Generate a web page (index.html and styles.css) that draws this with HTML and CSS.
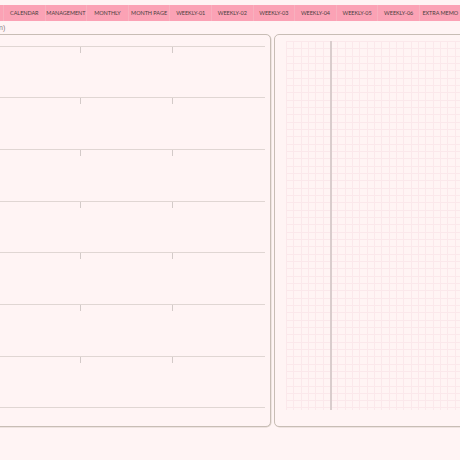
FILE: index.html
```html
<!DOCTYPE html>
<html>
<head>
<meta charset="utf-8">
<link rel="stylesheet" href="styles.css">
</head>
<body>
<div class="page">
  <nav class="tabs">
    <span class="tab lead"></span>
    <span class="tab">CALENDAR</span>
    <span class="tab">MANAGEMENT</span>
    <span class="tab">MONTHLY</span>
    <span class="tab">MONTH PAGE</span>
    <span class="tab">WEEKLY-01</span>
    <span class="tab">WEEKLY-02</span>
    <span class="tab">WEEKLY-03</span>
    <span class="tab">WEEKLY-04</span>
    <span class="tab">WEEKLY-05</span>
    <span class="tab">WEEKLY-06</span>
    <span class="tab">EXTRA MEMO</span>
  </nav>
  <div class="sub"><span class="sub-text">n)</span></div>
  <main class="panels">
    <section class="panel left">
      <div class="row"><div class="cell"></div><div class="cell"><i class="tick"></i></div><div class="cell"><i class="tick"></i></div></div>
      <div class="row"><div class="cell"></div><div class="cell"><i class="tick"></i></div><div class="cell"><i class="tick"></i></div></div>
      <div class="row"><div class="cell"></div><div class="cell"><i class="tick"></i></div><div class="cell"><i class="tick"></i></div></div>
      <div class="row"><div class="cell"></div><div class="cell"><i class="tick"></i></div><div class="cell"><i class="tick"></i></div></div>
      <div class="row"><div class="cell"></div><div class="cell"><i class="tick"></i></div><div class="cell"><i class="tick"></i></div></div>
      <div class="row"><div class="cell"></div><div class="cell"><i class="tick"></i></div><div class="cell"><i class="tick"></i></div></div>
      <div class="row"><div class="cell"></div><div class="cell"><i class="tick"></i></div><div class="cell"><i class="tick"></i></div></div>
      <div class="row last"></div>
    </section>
    <section class="panel right">
      <div class="grid"><div class="split"></div></div>
    </section>
  </main>
</div>
</body>
</html>
```

FILE: styles.css
```css
html, body {
  margin: 0;
  padding: 0;
  background: #fff4f4;
  overflow: hidden;
}
.page {
  width: 460px;
  height: 460px;
  padding-top: 5px;
  box-sizing: border-box;
  font-family: Lato, "Liberation Sans", sans-serif;
  overflow: hidden;
}
.tabs {
  display: flex;
  height: 16px;
  background: #fba2b5;
  margin-left: -38.6px;
  width: 520px;
}
.tab {
  flex: 0 0 41.6px;
  box-sizing: border-box;
  border-left: 1px solid #f8b0be;
  display: flex;
  align-items: center;
  justify-content: center;
  font-size: 5.5px;
  color: #4a3f40;
  white-space: nowrap;
  letter-spacing: -0.05px;
}
.tab.lead { border-left: none; }
.sub {
  height: 12.5px;
  display: flex;
  align-items: center;
}
.sub-text {
  font-family: "Liberation Sans", sans-serif;
  font-size: 7px;
  color: #8a8080;
  margin-left: -1px;
  padding-top: 1px;
}
.panels {
  display: flex;
  gap: 3px;
  height: 393.5px;
  margin-left: -10px;
  margin-right: -10px;
}
.panel {
  box-sizing: border-box;
  border: 1.5px solid #c8bdb5;
  border-radius: 5px;
  box-shadow: 0.5px 0.5px 0 #ddd2cc;
  background: #fff4f4;
}
.left {
  width: 281px;
  flex: none;
  padding: 11px 5.5px 0 0;
}
.row {
  height: 51.7px;
  box-sizing: border-box;
  border-top: 1px solid #e0d6d3;
  display: grid;
  grid-template-columns: 88.5px 92px 1fr;
}
.row.last {
  height: 1px;
  display: block;
}
.tick {
  display: block;
  width: 0;
  height: 6px;
  border-left: 1px solid #d3cac8;
}
.right {
  flex: 1;
  padding: 6px 0 0 11px;
}
.grid {
  height: 369px;
  display: flex;
  background-color: #fff4f4;
  background-image:
    repeating-linear-gradient(to right, #fbe8eb 0, #fbe8eb 1px, transparent 1px, transparent 7.33px),
    repeating-linear-gradient(to bottom, #fbe8eb 0, #fbe8eb 1px, transparent 1px, transparent 7.33px);
}
.split {
  margin-left: 44px;
  width: 1.5px;
  background: #d9cdcd;
}
```
